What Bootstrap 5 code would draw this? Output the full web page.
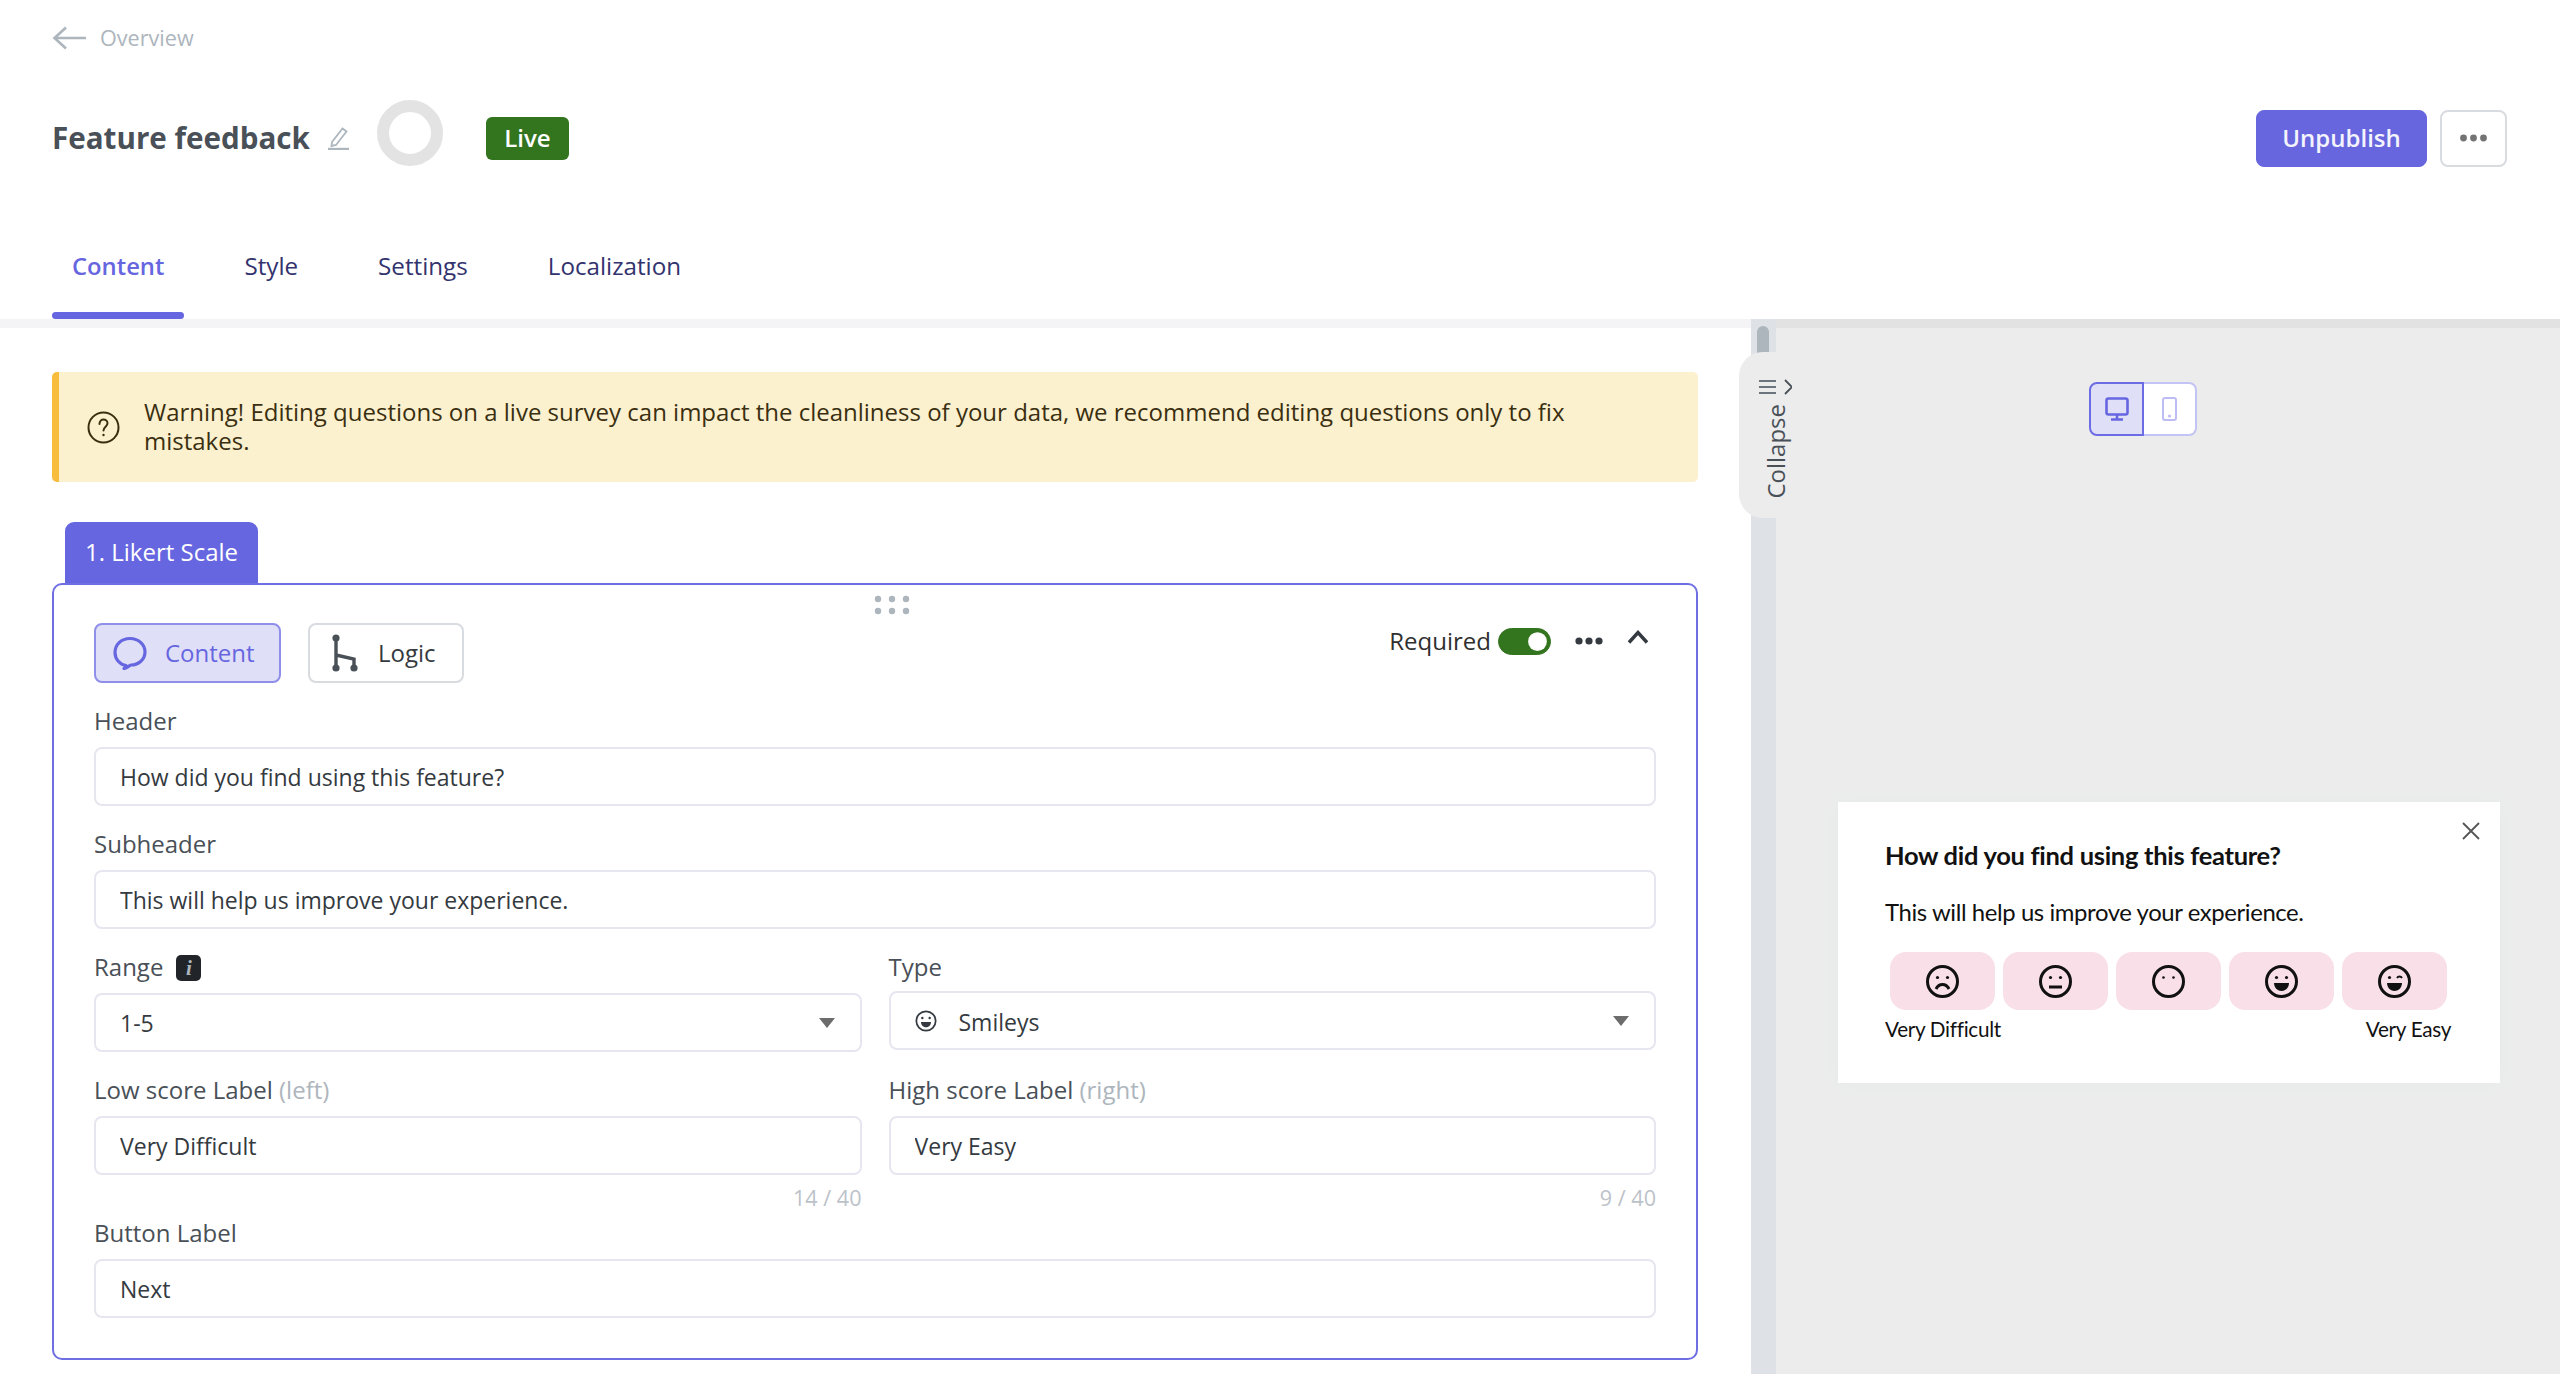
<!doctype html>
<html lang="en">
<head>
<meta charset="utf-8">
<title>Feature feedback</title>
<link rel="stylesheet" href="https://cdn.jsdelivr.net/npm/bootstrap@5.3.0/dist/css/bootstrap.min.css">
<style>
html,body{height:100%;overflow:hidden;}
body{font-family:"Open Sans","Noto Sans",sans-serif;font-size:23px;color:#495057;background:#fff;}
.top-head{height:319px;padding:0 53px 0 52px;}
.back-row{height:76px;color:#adb5bd;font-size:21.6px;gap:14px;}
.title-row{height:76px;margin-top:24px;}
.survey-title{font-size:29.6px;font-weight:700;color:#495057;margin:0;}
.title-pencil{margin-left:18px;margin-right:28px;margin-bottom:0;}
.status-ring{width:66px;height:66px;border:12px solid #e3e3e3;border-radius:50%;margin-bottom:10px;margin-right:43px;}
.live-tag{width:83px;height:43px;background:#33741f;color:#fff;border-radius:6px;font-size:24px;font-weight:600;}
.btn-unpublish{width:171px;height:57px;background:#6766de;border-color:#6766de;color:#f4f4fd;font-weight:600;font-size:24px;border-radius:8px;padding:0;}
.btn-unpublish:hover{background:#6766de;color:#fff;}
.btn-more{width:67px;height:57px;background:#fff;border:2px solid #d8dbe0;border-radius:8px;margin-left:13px;padding:0;}
.tab-strip{gap:40px;margin-top:39px;}
.tab-link{height:104px;line-height:102px;padding:0 20px;font-size:24.2px;font-weight:500;color:#33336e;position:relative;text-decoration:none;}
.tab-link.is-on{color:#6666e0;font-weight:600;font-size:23.8px;}
.tab-link.is-on::after{content:"";position:absolute;left:0;right:0;bottom:0;height:7px;border-radius:4px;background:#6666e0;}
.work-area{height:1055px;}
.edit-col{width:1751px;flex:none;border-top:9px solid #f4f4f6;padding:44px 53px 0 52px;overflow:hidden;}
.warn-box{height:110px;background:#fcf1cf;border:0;border-left:7px solid #f9bd3d;border-radius:5px;padding:0 28px 3px;margin:0;color:#3a2f10;line-height:29px;gap:24px;font-size:24px;}
.warn-box svg{flex:none;margin-top:3px;}
.q-tab{display:inline-block;height:61px;line-height:60px;padding:0 20px;background:#6666e0;color:#fff;border-radius:9px 9px 0 0;margin:40px 0 0 13px;font-size:24px;vertical-align:top;}
.q-card{height:777px;border:2px solid #6f6fe3;border-radius:10px;padding:38px 40px 0 40px;position:relative;background:#fff;}
.drag-dots{position:absolute;left:820px;top:10px;}
.mode-btn{height:60px;border-radius:8px;font-size:24px;background:#fff;border:2px solid #d8dbe0;color:#343a40;padding:0 26px 0 22px;gap:20px;}
.mode-btn.is-on{width:187px;background:#e0dff8;border-color:#8f8fea;color:#6666e0;padding:0 0 0 17px;gap:18px;}
.logic-btn{margin-left:27px;}
.req-label{color:#2f2f2f;font-size:24px;}
.form-check-input.req-toggle{width:53px;height:27px;margin:0 0 0 7px;float:none;background-color:#33741f;border-color:#33741f;}
.req-side{margin-top:-24px;margin-right:7px;}
.field-label{display:block;line-height:36px;margin:-1.5px 0 8.5px 0;color:#495057;font-size:24px;}
.field-label span{color:#adb5bd;}
.field-wrap{margin-bottom:21px;}
.field-wrap.first{margin-top:21px;}
.field-input{height:59px;border:2px solid #e6e6f0;border-radius:8px;padding:0 24px;font-size:23px;color:#343a40;}
.field-select{height:59px;border:2px solid #e6e6f0;border-radius:8px;padding:2px 24px 0;font-size:23px;color:#343a40;background-size:16px 10px;background-position:right 25px center;background-image:url("data:image/svg+xml,%3Csvg xmlns='http://www.w3.org/2000/svg' viewBox='0 0 16 10'%3E%3Cpath d='M0 0h16L8 10z' fill='%236c6c6c'/%3E%3C/svg%3E");}
.type-gap{gap:22px;display:flex;align-items:center;margin-top:-2px;padding-top:4px;}
.type-gap svg{margin-top:-4px;}
.two-col{display:grid;grid-template-columns:1fr 1fr;column-gap:27px;}
.info-chip{display:inline-flex;align-items:center;justify-content:center;width:25px;height:26px;background:#212529;color:#fff;border-radius:5px;font:italic 700 21px "Liberation Serif",serif;margin-left:13px;vertical-align:1px;}
.char-count{text-align:right;color:#bcc2c9;font-size:21.6px;line-height:28px;margin-top:9px;margin-bottom:-17px;}
.gutter{width:25px;flex:none;background:#dee2e6;position:relative;}
.thumb{position:absolute;left:6px;top:7px;width:12px;height:30px;background:#adb5bd;border-radius:6px 6px 0 0;}
.collapse-tab{position:absolute;left:-12px;top:33px;width:50px;height:166px;background:#ececec;border-radius:24px 0 0 24px;display:flex;flex-direction:column;align-items:center;padding:27px 0 0 22px;}
.collapse-word{writing-mode:vertical-rl;transform:rotate(180deg);font-size:24px;color:#495057;line-height:28px;margin-top:9px;margin-left:2px;}
.preview-col{flex:1;background:#ececec;border-top:9px solid #e2e2e2;padding:54px 0 0 62px;}
.device-switch{width:108px;height:54px;margin-left:251px;}
.device-btn{flex:1;display:flex;align-items:center;justify-content:center;background:#fff;border:2px solid #c4c3f6;}
.device-btn.left-one{background:#e0dff8;border-color:#6c6ce4;border-radius:8px 0 0 8px;}
.device-btn.right-one{border-left:0;border-radius:0 8px 8px 0;}
.preview-box{width:662px;height:281px;margin-top:366px;background:#fff;padding:0 47px;position:relative;font-family:Lato,sans-serif;color:#111;box-shadow:0 0 14px #e6eaea;}
.prev-close{position:absolute;right:20px;top:20px;}
.prev-title{font-size:25.5px;font-weight:700;margin:0;padding-top:35px;line-height:36px;letter-spacing:-.3px;}
.prev-sub{font-size:23.9px;line-height:36px;margin-top:21px;letter-spacing:-.4px;}
.smile-row{gap:8px;margin:22px 0 0 5px;}
.smile-cell{width:105px;height:58px;background:#f9dfe8;border-radius:16px;display:flex;align-items:center;justify-content:center;}
.scale-ends{width:566px;font-size:20.7px;line-height:30px;margin-top:4px;letter-spacing:-.3px;}
</style>
</head>
<body>
<header class="top-head">
  <div class="back-row d-flex align-items-center">
    <svg width="34" height="24" viewBox="0 0 34 24" fill="none" stroke="#adb5bd" stroke-width="2.6"><path d="M34 12H3M14 1.5 2.5 12 14 22.5"/></svg>
    <span>Overview</span>
  </div>
  <div class="title-row d-flex align-items-center">
    <h1 class="survey-title">Feature feedback</h1>
    <svg class="title-pencil" width="21" height="24" viewBox="0 0 21 24" fill="none" stroke="#adb5bd" stroke-width="1.8"><path d="M4 16 14.5 2.5l4 3L8 19l-4.5 1z"/><path d="M0 23h21" stroke-width="2.4"/></svg>
    <div class="status-ring"></div>
    <span class="live-tag d-inline-flex align-items-center justify-content-center">Live</span>
    <button class="btn btn-unpublish ms-auto" type="button">Unpublish</button>
    <button class="btn btn-more d-flex align-items-center justify-content-center" type="button" aria-label="More">
      <svg width="27" height="8" viewBox="0 0 27 8" fill="#737373"><circle cx="3.5" cy="4" r="3.4"/><circle cx="13.5" cy="4" r="3.4"/><circle cx="23.5" cy="4" r="3.4"/></svg>
    </button>
  </div>
  <nav class="tab-strip nav">
    <a class="tab-link is-on" href="#">Content</a>
    <a class="tab-link" href="#">Style</a>
    <a class="tab-link" href="#">Settings</a>
    <a class="tab-link" href="#">Localization</a>
  </nav>
</header>
<main class="work-area d-flex">
  <section class="edit-col">
    <div class="warn-box alert d-flex align-items-center" role="alert">
      <svg width="33" height="33" viewBox="0 0 33 33" fill="none" stroke="#3a2f10" stroke-width="2"><circle cx="16.5" cy="16.5" r="15"/><path d="M12.5 13c0-3 2-4.5 4-4.5s4 1.5 4 3.8c0 3.4-4 3.4-4 7.2" stroke-linecap="round"/><circle cx="16.5" cy="24" r="1.2" fill="#3a2f10" stroke="none"/></svg>
      <div>Warning! Editing questions on a live survey can impact the cleanliness of your data, we recommend editing questions only to fix mistakes.</div>
    </div>
    <div class="q-tab">1. Likert Scale</div>
    <div class="q-card">
      <svg class="drag-dots" width="36" height="20" viewBox="0 0 36 20" fill="#adb5bd"><circle cx="4" cy="4" r="3.2"/><circle cx="18" cy="4" r="3.2"/><circle cx="32" cy="4" r="3.2"/><circle cx="4" cy="16" r="3.2"/><circle cx="18" cy="16" r="3.2"/><circle cx="32" cy="16" r="3.2"/></svg>
      <div class="d-flex align-items-center">
        <button class="mode-btn is-on btn d-flex align-items-center" type="button">
          <svg width="34" height="34" viewBox="0 0 34 34" fill="none" stroke="#6666e0" stroke-width="3.2"><path d="M13 29.5c-6-1-11-6-11-13C2 9 8 2.500 17 2.500S32 9 32 16c0 8-7 13-14 13-1 0-4 3-7 3.500 1.500-1 2.500-2 2-3z" stroke-linejoin="round"/></svg>
          <span>Content</span>
        </button>
        <button class="mode-btn logic-btn btn d-flex align-items-center" type="button">
          <svg width="26" height="38" viewBox="0 0 26 38" fill="#495057" stroke="#495057"><circle cx="4" cy="4" r="3.6" stroke="none"/><circle cx="4" cy="34" r="3.6" stroke="none"/><circle cx="22" cy="34" r="3.6" stroke="none"/><path d="M4 4v30M4 21l18 4v9" fill="none" stroke-width="3.4"/></svg>
          <span>Logic</span>
        </button>
        <div class="req-side ms-auto d-flex align-items-center">
          <span class="req-label">Required</span>
          <div class="form-check form-switch p-0 m-0 d-flex">
            <input class="form-check-input req-toggle" type="checkbox" role="switch" checked aria-label="Required">
          </div>
          <svg class="ms-4" width="28" height="8" viewBox="0 0 28 8" fill="#343a40"><circle cx="4" cy="4" r="3.6"/><circle cx="14" cy="4" r="3.6"/><circle cx="24" cy="4" r="3.6"/></svg>
          <svg class="ms-4 mb-2" width="22" height="14" viewBox="0 0 22 14" fill="none" stroke="#343a40" stroke-width="3.4"><path d="M2 12.500 11 2.500l9 10"/></svg>
        </div>
      </div>
      <div class="field-wrap first">
        <label class="field-label">Header</label>
        <input class="form-control field-input" value="How did you find using this feature?">
      </div>
      <div class="field-wrap">
        <label class="field-label">Subheader</label>
        <input class="form-control field-input" value="This will help us improve your experience.">
      </div>
      <div class="two-col">
        <div class="field-wrap">
          <label class="field-label">Range<span class="info-chip">i</span></label>
          <select class="form-select field-select"><option>1-5</option></select>
        </div>
        <div class="field-wrap">
          <label class="field-label">Type</label>
          <div class="form-select field-select type-gap">
            <svg width="22" height="22" viewBox="0 0 33 33" fill="none" stroke="#343a40" stroke-width="2.6"><circle cx="16.500" cy="16.500" r="14.500"/><circle cx="11" cy="12" r="1.800" fill="#343a40" stroke="none"/><circle cx="22" cy="12" r="1.800" fill="#343a40" stroke="none"/><path d="M9 18h15c0 5-4 8-7.500 8S9 23 9 18z" fill="#343a40" stroke="none"/></svg>
            <span>Smileys</span>
          </div>
        </div>
        <div class="field-wrap">
          <label class="field-label">Low score Label <span>(left)</span></label>
          <input class="form-control field-input" value="Very Difficult">
          <div class="char-count">14 / 40</div>
        </div>
        <div class="field-wrap">
          <label class="field-label">High score Label <span>(right)</span></label>
          <input class="form-control field-input" value="Very Easy">
          <div class="char-count">9 / 40</div>
        </div>
      </div>
      <div class="field-wrap">
        <label class="field-label">Button Label</label>
        <input class="form-control field-input" value="Next">
      </div>
    </div>
  </section>
  <div class="gutter">
    <div class="thumb"></div>
    <div class="collapse-tab">
      <svg width="33" height="16" viewBox="0 0 33 16" fill="none" stroke="#495057" stroke-width="1.800"><path d="M0 2h17M0 8h17M0 14h17" stroke="#6c757d"/><path d="M26 1l7 7-7 7"/></svg>
      <span class="collapse-word">Collapse</span>
    </div>
  </div>
  <section class="preview-col">
    <div class="device-switch d-flex">
      <div class="device-btn left-one">
        <svg width="24" height="24" viewBox="0 0 24 24" fill="none" stroke="#6666e0" stroke-width="2.600"><rect x="1.500" y="1.500" width="21" height="16" rx="2"/><path d="M12 18v4M6 22.500h12"/></svg>
      </div>
      <div class="device-btn right-one">
        <svg width="15" height="24" viewBox="0 0 15 24" fill="none" stroke="#bdbcf5" stroke-width="2"><rect x="1" y="1" width="13" height="22" rx="2"/><circle cx="7.500" cy="19" r=".6" fill="#8f8fea"/></svg>
      </div>
    </div>
    <div class="preview-box">
      <svg class="prev-close" width="18" height="18" viewBox="0 0 18 18" fill="none" stroke="#555" stroke-width="1.800"><path d="M1 1l16 16M17 1 1 17"/></svg>
      <h2 class="prev-title">How did you find using this feature?</h2>
      <div class="prev-sub">This will help us improve your experience.</div>
      <div class="smile-row d-flex">
        <div class="smile-cell"><svg width="33" height="33" viewBox="0 0 33 33" fill="none" stroke="#111" stroke-width="3"><circle cx="16.500" cy="16.500" r="15"/><circle cx="11.500" cy="12.500" r="1.600" fill="#111" stroke="none"/><circle cx="21.500" cy="12.500" r="1.600" fill="#111" stroke="none"/><path d="M10 24c3-6 10-6 13 0" stroke-width="3"/></svg></div>
        <div class="smile-cell"><svg width="33" height="33" viewBox="0 0 33 33" fill="none" stroke="#111" stroke-width="3"><circle cx="16.500" cy="16.500" r="15"/><circle cx="11.500" cy="12.500" r="1.600" fill="#111" stroke="none"/><circle cx="21.500" cy="12.500" r="1.600" fill="#111" stroke="none"/><path d="M10 22h13" stroke-width="3"/></svg></div>
        <div class="smile-cell"><svg width="33" height="33" viewBox="0 0 33 33" fill="none" stroke="#111" stroke-width="3"><circle cx="16.500" cy="16.500" r="15"/><circle cx="11.500" cy="12.500" r="1.300" fill="#111" stroke="none"/><circle cx="21.500" cy="12.500" r="1.300" fill="#111" stroke="none"/></svg></div>
        <div class="smile-cell"><svg width="33" height="33" viewBox="0 0 33 33" fill="none" stroke="#111" stroke-width="3"><circle cx="16.500" cy="16.500" r="15"/><circle cx="11.500" cy="12.500" r="1.600" fill="#111" stroke="none"/><circle cx="21.500" cy="12.500" r="1.600" fill="#111" stroke="none"/><path d="M9 18h15c0 5-4 8-7.500 8S9 23 9 18z" fill="#111" stroke="none"/></svg></div>
        <div class="smile-cell"><svg width="33" height="33" viewBox="0 0 33 33" fill="none" stroke="#111" stroke-width="3"><circle cx="16.500" cy="16.500" r="15"/><circle cx="11.500" cy="12.500" r="1.600" fill="#111" stroke="none"/><path d="M19 13c1-2 4-2 5 0" stroke-width="1.800"/><path d="M9 18h15c0 5-4 8-7.500 8S9 23 9 18z" fill="#111" stroke="none"/></svg></div>
      </div>
      <div class="scale-ends d-flex justify-content-between"><span>Very Difficult</span><span>Very Easy</span></div>
    </div>
  </section>
</main>
<script src="https://cdn.jsdelivr.net/npm/bootstrap@5.3.0/dist/js/bootstrap.bundle.min.js"></script>
</body>
</html>
